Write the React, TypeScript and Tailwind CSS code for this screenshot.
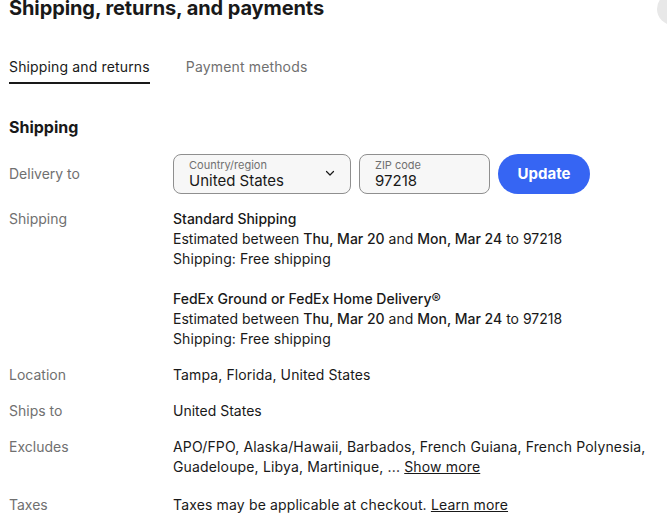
import React from "react";

const Label = ({ children }: { children: React.ReactNode }) => (
  <div className="text-[14px] leading-[20px] text-[#707070]">{children}</div>
);

export default function App() {
  return (
    <div className="relative w-[667px] h-[531px] overflow-hidden bg-white text-[#191919] font-['Inter',sans-serif]">
      <div className="absolute left-[657px] top-[-7px] w-[32px] h-[32px] rounded-full bg-[#e8e8e8]" />
      <div className="pl-[9px] mt-[-6px]">
        <h2 className="text-[20px] leading-[28px] font-bold tracking-[-0.1px]">Shipping, returns, and payments</h2>
        <div className="mt-[35px] flex gap-[36px] text-[14px] leading-[20px] tracking-[0.15px]">
          <div className="pb-[5px] border-b-2 border-[#191919] text-[#191919]">Shipping and returns</div>
          <div className="text-[#707070]">Payment methods</div>
        </div>
        <h3 className="mt-[31px] text-[16px] leading-[24px] font-bold">Shipping</h3>
        <div className="mt-[15px] grid grid-cols-[164px_1fr] text-[14px] leading-[20px]">
          <div className="flex items-center h-[40px]"><Label>Delivery to</Label></div>
          <div className="flex gap-[8px] h-[40px]">
            <div className="w-[178px] h-[40px] rounded-[8px] border border-[#8f8f8f] bg-[#f7f7f7] pl-[15px] pr-[14px] flex items-center justify-between">
              <div className="flex flex-col">
                <span className="text-[11px] leading-[13px] text-[#707070]">Country/region</span>
                <span className="text-[15px] leading-[18px] text-[#191919]">United States</span>
              </div>
              <svg width="12" height="12" viewBox="0 0 12 12" fill="none" className="mt-[-2px]">
                <path d="M2.5 4.5 L6 8 L9.5 4.5" stroke="#191919" strokeWidth="1.2" strokeLinecap="round" strokeLinejoin="round" />
              </svg>
            </div>
            <div className="w-[131px] h-[40px] rounded-[8px] border border-[#8f8f8f] bg-[#f7f7f7] pl-[15px] flex flex-col justify-center">
              <span className="text-[11px] leading-[13px] text-[#707070]">ZIP code</span>
              <span className="text-[15px] leading-[18px] text-[#191919]">97218</span>
            </div>
            <button className="w-[92px] h-[40px] rounded-full bg-[#3665f3] text-white text-[15px] font-bold">Update</button>
          </div>

          <div className="mt-[15px]"><Label>Shipping</Label></div>
          <div className="mt-[15px]">
            <div className="font-medium">Standard Shipping</div>
            <div>Estimated between <span className="font-medium">Thu, Mar 20</span> and <span className="font-medium">Mon, Mar 24</span> to 97218</div>
            <div className="tracking-[0.1px]">Shipping: Free shipping</div>
            <div className="mt-[20px] font-medium">FedEx Ground or FedEx Home Delivery®</div>
            <div>Estimated between <span className="font-medium">Thu, Mar 20</span> and <span className="font-medium">Mon, Mar 24</span> to 97218</div>
            <div className="tracking-[0.1px]">Shipping: Free shipping</div>
          </div>

          <div className="mt-[16px]"><Label>Location</Label></div>
          <div className="mt-[16px] tracking-[0.1px]">Tampa, Florida, United States</div>

          <div className="mt-[16px]"><Label>Ships to</Label></div>
          <div className="mt-[16px]">United States</div>

          <div className="mt-[16px]"><Label>Excludes</Label></div>
          <div className="mt-[16px] tracking-[0.15px]">
            APO/FPO, Alaska/Hawaii, Barbados, French Guiana, French Polynesia, Guadeloupe, Libya, Martinique, ... <span className="underline">Show more</span>
          </div>

          <div className="mt-[18px]"><Label>Taxes</Label></div>
          <div className="mt-[18px] tracking-[0.15px]">Taxes may be applicable at checkout. <span className="underline">Learn more</span></div>
        </div>
      </div>
    </div>
  );
}
